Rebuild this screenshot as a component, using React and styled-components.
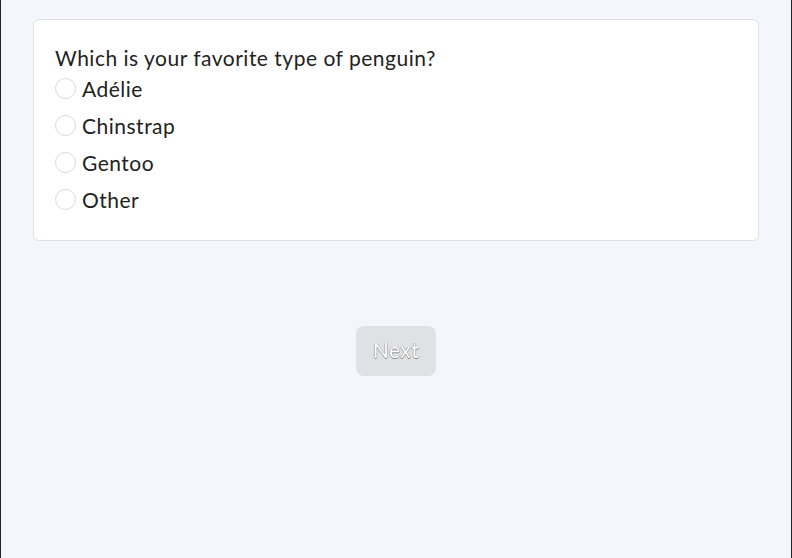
import React from "react";
import styled, { createGlobalStyle } from "styled-components";

const Global = createGlobalStyle`
  html, body { margin: 0; padding: 0; height: 100%; }
  body { background: #f3f6fa; font-family: Lato, "Open Sans", sans-serif; }
  #root { height: 100%; }
`;

const Page = styled.div`
  box-sizing: border-box;
  height: 558px;
  background: #f3f6fa;
  border-left: 1px solid #1f2329;
  border-right: 1px solid #1f2329;
  padding: 19px 32px 0;
  display: flex;
  flex-direction: column;
  align-items: stretch;
`;

const Card = styled.div`
  background: #ffffff;
  border: 1px solid #dfe1e5;
  border-radius: 6px;
  padding: 25px 21px 22px;
  display: flex;
  flex-direction: column;
`;

const Question = styled.div`
  font-size: 21px;
  color: #222;
  line-height: 25px;
  letter-spacing: 0.5px;
`;

const Option = styled.label`
  display: flex;
  align-items: center;
  gap: 6px;
  height: 37px;
  font-size: 21px;
  letter-spacing: 0.5px;
  color: #222;
`;

const Circle = styled.span`
  box-sizing: border-box;
  width: 21px;
  height: 21px;
  border-radius: 50%;
  border: 1px solid #d9d9d9;
  background: #fff;
  flex: none;
`;

const ButtonRow = styled.div`
  display: flex;
  justify-content: center;
  margin-top: 85px;
`;

const NextButton = styled.button`
  width: 80px;
  height: 50px;
  border: none;
  border-radius: 8px;
  background: #dfe2e5;
  padding: 0 0 4px;
  font-family: Lato, "Open Sans", sans-serif;
  font-size: 21px;
  letter-spacing: 0.5px;
  color: #ffffff;
  text-shadow: 0.5px 0 0 #8a8a8a, -0.5px 0 0 #8a8a8a, 0 0.5px 0 #8a8a8a, 0 -0.5px 0 #8a8a8a;
  cursor: default;
`;

const options = ["Adélie", "Chinstrap", "Gentoo", "Other"];

export default function App() {
  return (
    <>
      <Global />
      <Page>
        <Card>
          <Question>Which is your favorite type of penguin?</Question>
          {options.map((o) => (
            <Option key={o}>
              <Circle />
              {o}
            </Option>
          ))}
        </Card>
        <ButtonRow>
          <NextButton disabled>Next</NextButton>
        </ButtonRow>
      </Page>
    </>
  );
}
